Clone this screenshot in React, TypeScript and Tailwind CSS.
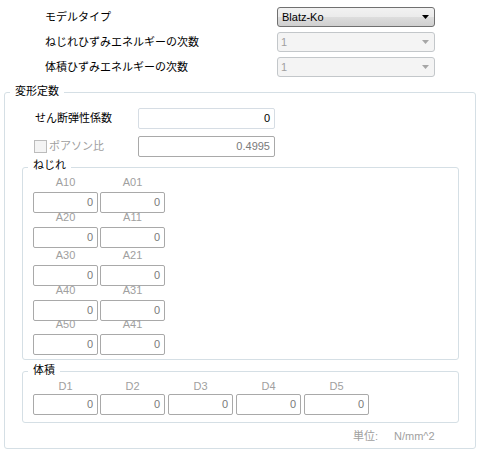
const font = "font-['Liberation_Sans','Noto_Sans_CJK_JP',sans-serif]";

function Combo({ value, disabled }: { value: string; disabled?: boolean }) {
  return (
    <div
      className={
        disabled
          ? "relative w-[158px] h-[20px] rounded-[3px] border border-[#c3c7ca] bg-[#f4f4f4] text-[#a0a0a0] pl-[3px] leading-[18px]"
          : "relative w-[158px] h-[20px] rounded-[3px] border border-[#707070] bg-[linear-gradient(#f2f2f2_0%,#ebebeb_50%,#dddddd_51%,#cfcfcf_100%)] text-black pl-[4px] leading-[18px]"
      }
    >
      {value}
      <svg
        className="absolute right-[5px] top-[7px]"
        width="7"
        height="4"
        viewBox="0 0 7 4"
      >
        <path d="M0 0H7L3.5 4Z" fill={disabled ? "#a6a6a6" : "#000"} />
      </svg>
    </div>
  );
}

function Box({
  value,
  w = "w-[65px]",
  enabled,
}: {
  value: string;
  w?: string;
  enabled?: boolean;
}) {
  return (
    <div
      className={`${w} h-[21px] rounded-[2px] border text-right pr-[4px] leading-[19px] ${
        enabled
          ? "border-[#d6dde4] text-black bg-white"
          : "border-[#a9a9a9] text-[#7a7a7a] bg-white"
      }`}
    >
      {value}
    </div>
  );
}

function Group({
  title,
  titleTop,
  className,
  children,
}: {
  title: string;
  titleTop: string;
  className: string;
  children: React.ReactNode;
}) {
  return (
    <div className={`relative rounded-[3px] border border-[#d5dfe5] ${className}`}>
      <span
        className={`absolute ${titleTop} left-[5px] bg-white px-[5px] leading-[14px] text-black`}
      >
        {title}
      </span>
      {children}
    </div>
  );
}

const torsion: [string, string, string][] = [
  ["A10", "A01", "mt-0"],
  ["A20", "A11", "-mt-[3px]"],
  ["A30", "A21", "mt-0"],
  ["A40", "A31", "-mt-[3px]"],
  ["A50", "A41", "-mt-[4px]"],
];

export default function App() {
  return (
    <div className={`w-[481px] h-[454px] bg-white text-[11px] text-black ${font}`}>
      <div className="pt-[7px] flex flex-col gap-[5px]">
        {[
          ["モデルタイプ", "Blatz-Ko", false],
          ["ねじれひずみエネルギーの次数", "1", true],
          ["体積ひずみエネルギーの次数", "1", true],
        ].map(([label, value, dis]) => (
          <div key={label as string} className="flex items-center h-[20px]">
            <div className="w-[277px] pl-[45px]">{label}</div>
            <Combo value={value as string} disabled={dis as boolean} />
          </div>
        ))}
      </div>

      <Group
        title="変形定数"
        titleTop="top-[-9px]"
        className="mt-[15px] ml-[4px] w-[472px] h-[357px]"
      >
        <div className="pt-[15px] pl-[30px] flex items-center">
          <div className="w-[103px]">せん断弾性係数</div>
          <Box value="0" w="w-[137px]" enabled />
        </div>
        <div className="mt-[7px] pl-[29px] flex items-center">
          <div className="w-[104px] flex items-center gap-[2px] text-[#a0a0a0]">
            <span className="w-[13px] h-[13px] border border-[#bcbcbc] bg-[#f4f4f4]" />
            ポアソン比
          </div>
          <Box value="0.4995" w="w-[137px]" />
        </div>

        <Group
          title="ねじれ"
          titleTop="top-[-10px]"
          className="mt-[10px] ml-[17px] w-[437px] h-[193px]"
        >
          <div className="pt-[7px] pl-[10px]">
            {torsion.map(([a, b, mt]) => (
              <div key={a} className={mt}>
                <div className="flex gap-[2px] h-[14px] leading-[14px] text-[#a0a0a0]">
                  <div className="w-[65px] text-center">{a}</div>
                  <div className="w-[65px] text-center">{b}</div>
                </div>
                <div className="mt-[3px] flex gap-[2px]">
                  <Box value="0" />
                  <Box value="0" />
                </div>
              </div>
            ))}
          </div>
        </Group>

        <Group
          title="体積"
          titleTop="top-[-9px]"
          className="mt-[11px] ml-[17px] w-[437px] h-[52px]"
        >
          <div className="pt-[7px] pl-[10px]">
            <div className="flex h-[14px] leading-[14px] text-[#a0a0a0]">
              <div className="w-[65px] text-center">D1</div>
              <div className="w-[65px] ml-[2px] text-center">D2</div>
              <div className="w-[65px] ml-[3px] text-center">D3</div>
              <div className="w-[65px] ml-[3px] text-center">D4</div>
              <div className="w-[65px] ml-[3px] text-center">D5</div>
            </div>
            <div className="mt-[1px] flex">
              <Box value="0" />
              <div className="ml-[2px]">
                <Box value="0" />
              </div>
              <div className="ml-[3px]">
                <Box value="0" />
              </div>
              <div className="ml-[3px]">
                <Box value="0" />
              </div>
              <div className="ml-[3px]">
                <Box value="0" />
              </div>
            </div>
          </div>
        </Group>

        <div className="mt-[6px] pl-[348px] flex text-[#a0a0a0] leading-[14px]">
          <span className="w-[41px]">単位:</span>
          <span>N/mm^2</span>
        </div>
      </Group>
    </div>
  );
}
